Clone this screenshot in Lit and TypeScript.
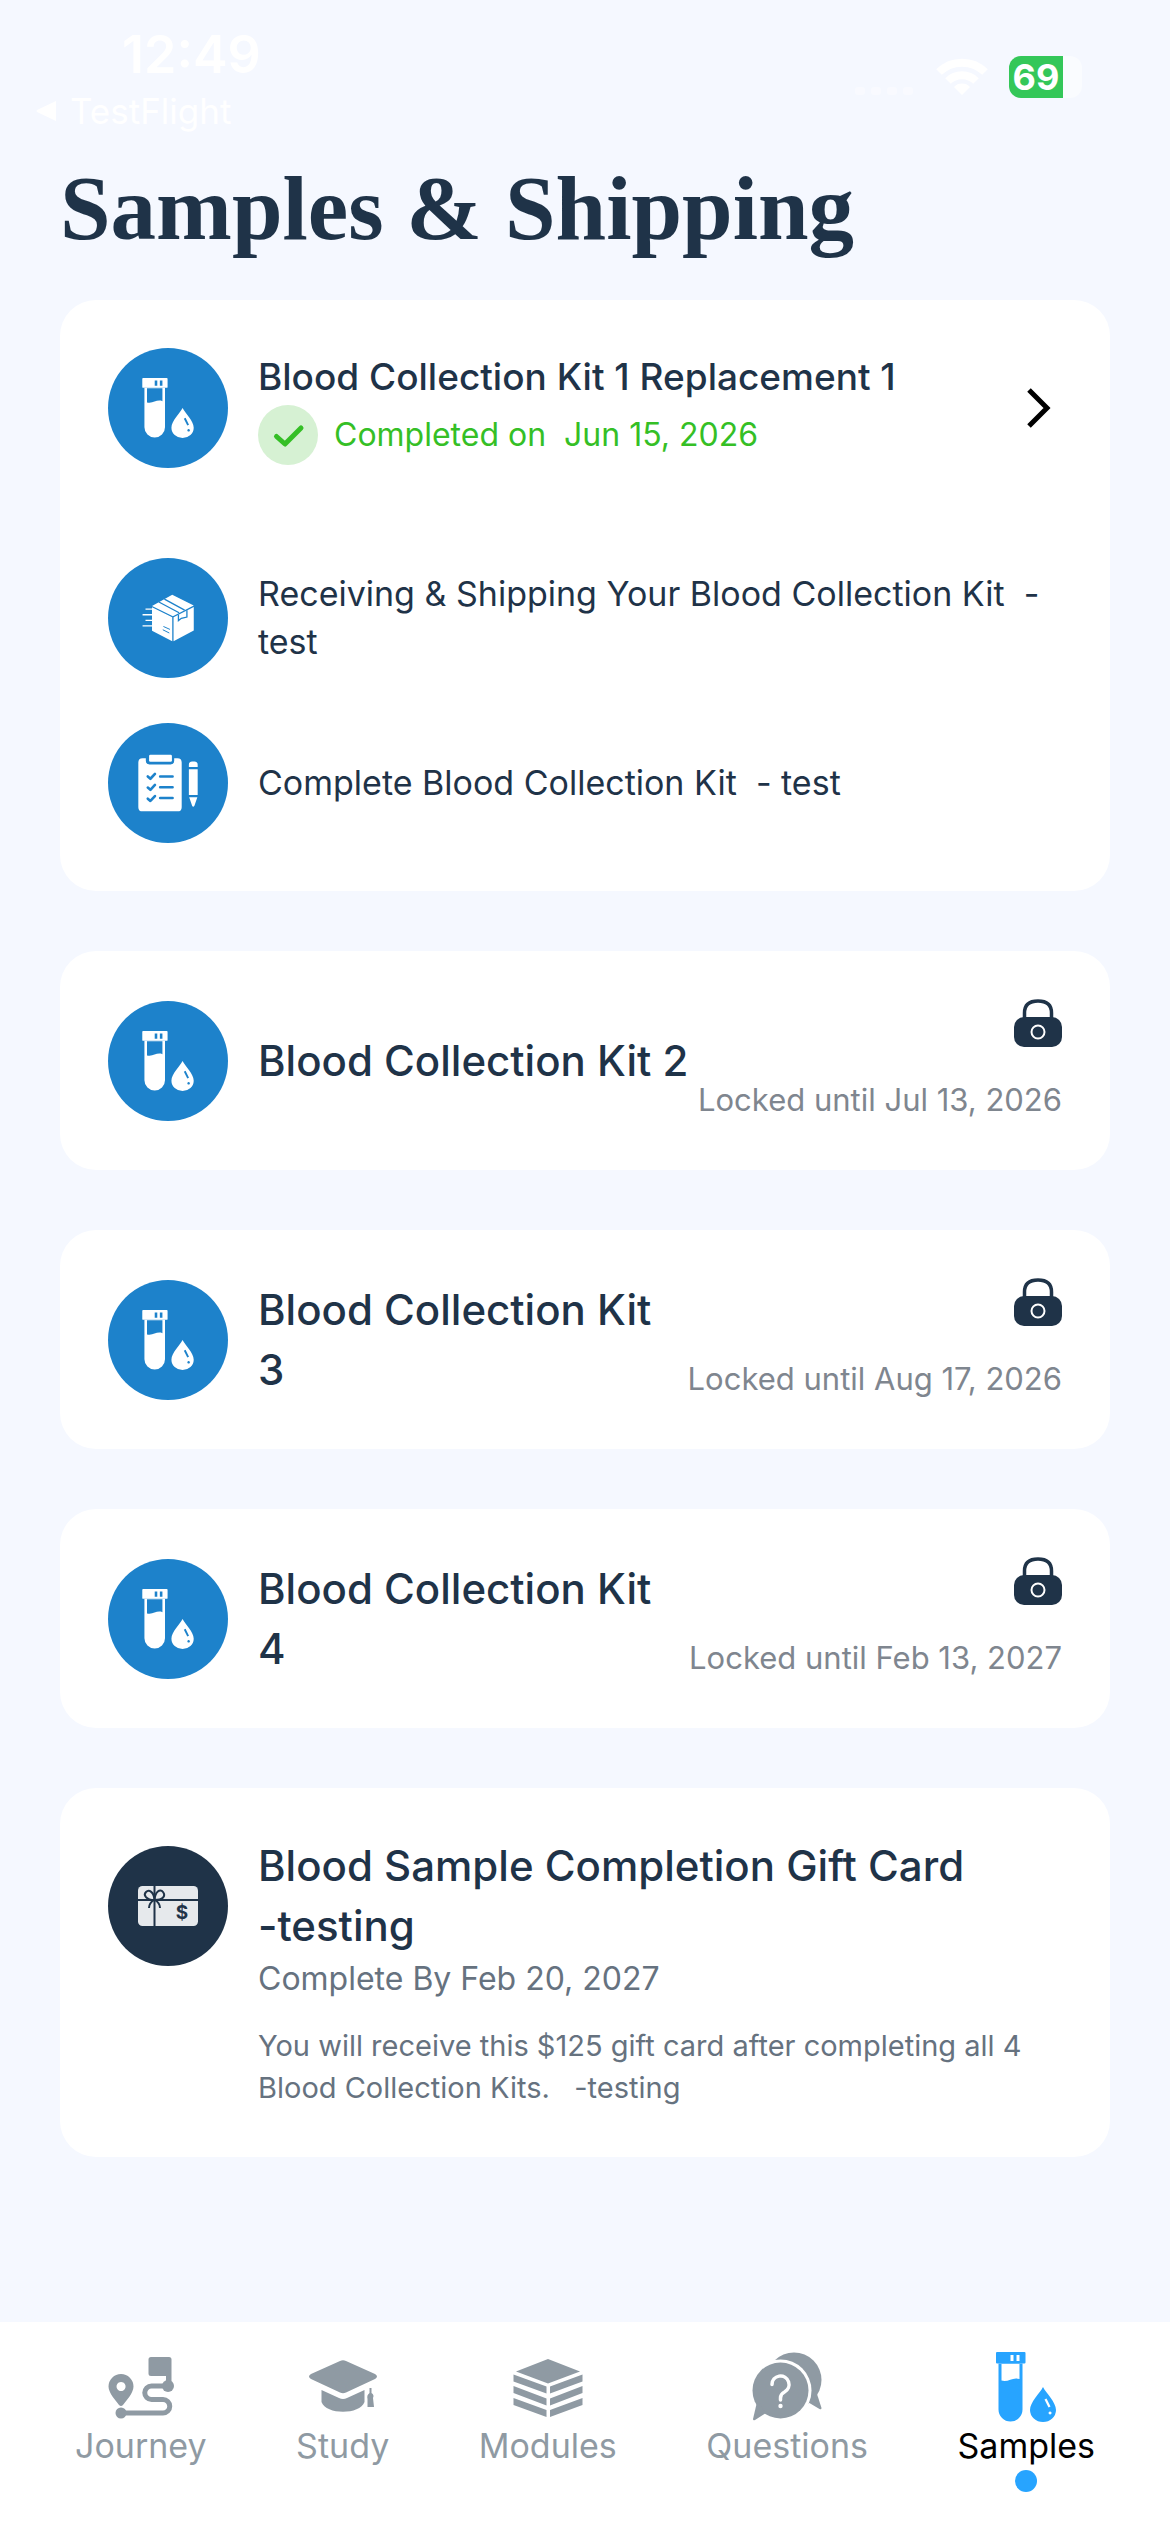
import { LitElement, html, css, svg, nothing, TemplateResult } from 'lit';
import { customElement, property } from 'lit/decorators.js';
import { classMap } from 'lit/directives/class-map.js';

const tubeIcon = html`
  <svg class="icon" viewBox="0 0 60 70" fill="currentColor" aria-hidden="true">
    <path
      fill-rule="evenodd"
      d="M1 0H28.500q1 0 1 1V10.500q0 1-1 1H1q-1 0-1-1V1q0-1 1-1zM14.500 3v6h3V3zM20.500 3v6h3V3z"
    />
    <path
      fill-rule="evenodd"
      d="M2.500 11.500H26.500V57.500a12 12 0 0 1-24 0zM5.500 12V28.500c7 2 11-4 18-1.500V12z"
    />
    <path
      fill-rule="evenodd"
      d="M47 35c3 6 13 15 13 23a13 12 0 0 1-26 0c0-8 10-17 13-23zM48.500 47.500l4 8 2-1-4-8zM54 59.500a1.500 1.500 0 1 0 .1 0z"
    />
  </svg>
`;

const boxIcon = html`
  <svg class="icon" viewBox="0 0 184 144" aria-hidden="true">
    <path
      fill="currentColor"
      d="M105 1L43 35L107 67L171 34zM43 39L105 70V143L43 111zM109 70L171 38V110L109 143z"
    />
    <g fill="none" stroke="#1d82cb" stroke-width="4">
      <path d="M64 23L126 56M81 14L143 48" />
      <path d="M124 62V80L133 73L150 69V48" />
      <path d="M78 98L98 107M76 108L96 118" stroke-width="3" />
    </g>
    <path
      d="M23 45H43M14 62H43M23 79H43M14 96H43"
      stroke="currentColor"
      stroke-width="4"
    />
  </svg>
`;

const clipboardIcon = html`
  <svg class="icon" viewBox="0 0 184 176" aria-hidden="true">
    <path
      fill="currentColor"
      d="M14 12H24V20q0 11 11 11H100q11 0 11-11V12H121q13 0 13 13V162q0 13-13 13H14q-13 0-13-13V25q0-13 13-13z"
    />
    <path
      fill="currentColor"
      d="M38 1H100q4 0 4 4V19q0 4-4 4H38q-4 0-4-4V5q0-4 4-4z"
    />
    <g
      fill="none"
      stroke="#1d82cb"
      stroke-width="8"
      stroke-linecap="round"
      stroke-linejoin="round"
    >
      <path d="M30 68l8 7L52 60M30 102l8 7L52 94M30 136l8 7L52 128" />
      <path d="M68 68H106M68 101H106M68 134H106" />
    </g>
    <path
      fill="currentColor"
      d="M156 39V32q0-10 10-10h7q10 0 10 10v7zM156 46h27V125h-27zM157 132h25L173 158q-4 6-7 0z"
    />
  </svg>
`;

const giftIcon = html`
  <svg class="icon" viewBox="0 0 60 40" aria-hidden="true">
    <rect width="60" height="40" rx="4.500" fill="#e6e9ec" />
    <g fill="none" stroke="#1f3348" stroke-width="2">
      <path d="M0 14H60M16.500 0V40" />
      <path
        d="M16.500 14C8 14 5 9 8 6s8 0 8.500 8C17 6 22 2 25 6s0 8-8.500 8zM16 14q-5 3-5 8M17 14q5 3 5 8"
      />
    </g>
    <text x="44" y="33" class="dollar">$</text>
  </svg>
`;

const lockIcon = html`
  <svg class="lock" viewBox="0 0 48 48" aria-hidden="true">
    <path
      d="M10.500 20V14q0-12 13.500-12t13.500 12V20"
      fill="none"
      stroke="#1f3348"
      stroke-width="3.500"
    />
    <rect y="18" width="48" height="30" rx="10" fill="#1f3348" />
    <circle cx="24" cy="33" r="6.500" fill="none" stroke="#fff" stroke-width="2" />
  </svg>
`;

const journeyIcon = svg`
  <path fill-rule="evenodd" d="M15 22a12.500 12.500 0 0 1 12.500 12.500C27.500 41 20 49 17 53q-2 2-4 0C10 49 2.500 41 2.500 34.500A12.500 12.500 0 0 1 15 22zM15 30a4.500 4.500 0 1 0 .1 0z" />
  <circle cx="15" cy="61" r="5.500" />
  <circle cx="62" cy="34" r="6" />
  <path d="M45 5H63q2.500 0 2.500 2.500V34H60V24H45q-2.500 0-2.500-2.500V7.500Q42.500 5 45 5z" />
  <path d="M15 61H57a6.500 6.500 0 0 0 0-13.500H45.500a6.500 6.500 0 0 1 0-13.500H62" fill="none" stroke="currentColor" stroke-width="5" />
`;

const studyIcon = svg`
  <path d="M32 9q3-1.500 6 0L67 22q4 2.500 0 5L38 40.500q-3 1.500-6 0L3 27q-4-2.500 0-5z" />
  <path d="M13.500 38L31 46q4 2 8 0L56.500 38V50C52 63 18 63 13.500 50z" />
  <path d="M61.500 36h2v5q3 2 1.500 5L66 55H59.500V47q-1-4 2-6z" />
`;

const modulesIcon = svg`
  <path d="M35 7L67 19.500L35 31.500L3 19.500z" />
  <path d="M.5 22.500L33.500 34.500V41.500L.5 29.500zM.5 34L33.500 46.500V53.500L.5 41zM.5 46L33.500 58V65L.5 53z" />
  <path d="M69.500 22.500L37 34.500V41.500L69.500 29.500zM69.500 34L37 46.500V53.500L69.500 41zM69.500 46L37 58V65L69.500 53z" />
`;

const questionsIcon = svg`
  <circle cx="42" cy="28" r="27.500" />
  <path d="M65 42L69.500 56q0 2-2 1L54 49z" />
  <circle cx="28.500" cy="38.500" r="31" fill="#fff" />
  <circle cx="28.500" cy="38.500" r="28" />
  <path d="M5 50L1 67q0 2 2 1L14 61z" />
  <path d="M20 32.500a8.500 8.500 0 1 1 12.500 7.500q-4 2-4 6V48" fill="none" stroke="#fff" stroke-width="3.500" stroke-linecap="round" />
  <circle cx="28.500" cy="54" r="2.200" fill="#fff" />
`;

@customElement('status-bar')
export class StatusBar extends LitElement {
  static styles = css`
    :host {
      display: flex;
      justify-content: space-between;
      align-items: flex-start;
      padding: 24px 88px 0 36px;
      color: #fff;
      font-family: Inter, 'Liberation Sans', sans-serif;
    }

    .time {
      padding-left: 86px;
      font-size: 52px;
      font-weight: 600;
      line-height: 62px;
    }

    .back {
      display: flex;
      align-items: center;
      gap: 12px;
      color: #fff;
      font-size: 35px;
      line-height: 50px;
      text-decoration: none;
    }

    .back svg {
      width: 22px;
      height: 22px;
    }

    .right {
      display: flex;
      align-items: center;
      gap: 21px;
      padding-top: 32px;
    }

    .dots {
      width: 60px;
      height: 40px;
      opacity: 0.4;
    }

    .wifi {
      width: 52px;
      height: 40px;
    }

    .battery {
      display: flex;
      align-items: center;
      width: 73px;
      height: 42px;
      border-radius: 12px;
      background: #fafcff;
      overflow: hidden;
    }

    .level {
      width: 54px;
      background: #34c759;
      font-size: 36px;
      font-weight: 700;
      line-height: 42px;
      text-align: center;
    }
  `;

  render() {
    return html`
      <div>
        <div class="time">12:49</div>
        <a class="back" href="#testflight">
          <svg viewBox="0 0 22 22" fill="currentColor" aria-hidden="true">
            <path d="M20 1v20L1 12q-1-1 0-2z" />
          </svg>
          TestFlight
        </a>
      </div>
      <div class="right">
        <svg class="dots" viewBox="0 0 60 40" fill="currentColor">
          <rect x="0" y="30" width="10" height="8" rx="3" />
          <rect x="16" y="30" width="10" height="8" rx="3" />
          <rect x="32" y="30" width="10" height="8" rx="3" />
          <rect x="48" y="30" width="10" height="8" rx="3" />
        </svg>
        <svg
          class="wifi"
          viewBox="0 0 52 40"
          fill="none"
          stroke="currentColor"
          stroke-width="8"
        >
          <path d="M3 15a33 33 0 0 1 46 0M12 24a20 20 0 0 1 28 0" />
          <path
            d="M26 38l-8-8a11 11 0 0 1 16 0z"
            fill="currentColor"
            stroke="none"
          />
        </svg>
        <div class="battery"><div class="level">69</div></div>
      </div>
    `;
  }
}

/* A round icon with whatever text stands next to it. */
@customElement('icon-row')
export class IconRow extends LitElement {
  @property({ attribute: false }) icon: TemplateResult | typeof nothing = nothing;

  @property({ type: Boolean, reflect: true }) dark = false;

  static styles = css`
    :host {
      display: flex;
      align-items: center;
      gap: 30px;
    }

    .circle {
      display: flex;
      flex: none;
      align-items: center;
      justify-content: center;
      width: 120px;
      height: 120px;
      border-radius: 50%;
      background: #1d82cb;
      color: #fff;
    }

    :host([dark]) {
      align-items: flex-start;
    }

    :host([dark]) .circle {
      margin-top: 10px;
      background: #1f3348;
    }

    .icon {
      width: 60px;
      height: 60px;
    }

    .dollar {
      fill: #1f3348;
      font: bold 19px Inter, sans-serif;
      text-anchor: middle;
    }

    .content {
      display: flex;
      flex: 1;
      min-width: 0;
    }
  `;

  render() {
    return html`
      <div class="circle">${this.icon}</div>
      <div class="content"><slot></slot></div>
    `;
  }
}

@customElement('tab-bar')
export class TabBar extends LitElement {
  @property() active = 'Samples';

  private tabs = [
    { label: 'Journey', icon: journeyIcon },
    { label: 'Study', icon: studyIcon },
    { label: 'Modules', icon: modulesIcon },
    { label: 'Questions', icon: questionsIcon },
    { label: 'Samples', icon: null },
  ];

  static styles = css`
    :host {
      display: block;
      background: #fff;
    }

    nav {
      display: flex;
      justify-content: space-between;
      min-height: 180px;
      padding: 30px 75px 0;
    }

    .tab {
      display: flex;
      flex-direction: column;
      align-items: center;
      color: #8f9aa3;
      font-size: 34px;
      line-height: 48px;
      text-decoration: none;
    }

    .tab svg {
      width: 70px;
      height: 70px;
      color: #8f9aa3;
    }

    .tab.active {
      color: #000;
    }

    .tab.active svg {
      color: #27a4ff;
    }

    .dot {
      width: 22px;
      height: 22px;
      border-radius: 50%;
      background: #27a4ff;
    }
  `;

  render() {
    return html`
      <nav aria-label="Main">
        ${this.tabs.map(({ label, icon }) => {
          const active = label === this.active;
          return html`
            <a
              class=${classMap({ tab: true, active })}
              href="#${label.toLowerCase()}"
              aria-current=${active ? 'page' : nothing}
            >
              ${icon
                ? html`<svg viewBox="0 0 70 70" fill="currentColor" aria-hidden="true">
                    ${icon}
                  </svg>`
                : tubeIcon}
              <span>${label}</span>
              ${active ? html`<span class="dot"></span>` : nothing}
            </a>
          `;
        })}
      </nav>
    `;
  }
}

@customElement('app-root')
export class AppRoot extends LitElement {
  private lockedKits = [
    { name: 'Blood Collection Kit 2', until: 'Jul 13, 2026' },
    { name: 'Blood Collection Kit 3', until: 'Aug 17, 2026' },
    { name: 'Blood Collection Kit 4', until: 'Feb 13, 2027' },
  ];

  static styles = css`
    :host {
      display: flex;
      flex-direction: column;
      min-height: 100vh;
      background: #f5f8ff;
      color: #1f3348;
      font-family: Inter, 'Open Sans', sans-serif;
    }

    h1,
    h2,
    p {
      margin: 0;
    }

    main {
      display: flex;
      flex: 1;
      flex-direction: column;
      gap: 60px;
      padding: 0 60px 60px;
    }

    h1 {
      padding: 18px 60px 36px;
      font-family: 'Liberation Serif', serif;
      font-size: 91px;
      font-weight: 700;
      line-height: 110px;
    }

    .card {
      display: flex;
      flex-direction: column;
      gap: 45px;
      padding: 48px;
      border-radius: 36px;
      background: #fff;
    }

    .first {
      margin-bottom: 45px;
    }

    .kit {
      display: flex;
      align-items: center;
      flex: 1;
      color: inherit;
      text-decoration: none;
    }

    .kit-text {
      flex: 1;
      padding-bottom: 3px;
    }

    .kit-title {
      font-size: 37px;
      font-weight: 500;
      line-height: 57px;
    }

    .done {
      display: flex;
      align-items: center;
      gap: 16px;
      color: #35bf26;
      font-size: 32px;
      line-height: 60px;
    }

    .check {
      width: 60px;
      height: 60px;
    }

    .chevron {
      width: 48px;
      height: 48px;
    }

    .step {
      flex: 1;
      color: inherit;
      font-size: 34px;
      line-height: 48px;
      text-decoration: none;
    }

    .title {
      flex: 1;
      align-self: center;
      font-size: 42px;
      font-weight: 500;
      line-height: 60px;
    }

    .locked {
      display: flex;
      flex-direction: column;
      align-items: flex-end;
      gap: 31px;
      padding-left: 5px;
      color: #7f868f;
      font-size: 31px;
      line-height: 44px;
      white-space: nowrap;
    }

    .lock {
      width: 48px;
      height: 48px;
    }

    .gift {
      flex: 1;
      color: #66727f;
    }

    .gift .title {
      color: #1f3348;
    }

    .nowrap {
      white-space: nowrap;
    }

    .due {
      font-size: 32px;
      line-height: 45px;
    }

    .note {
      padding-top: 24px;
      font-size: 29px;
      line-height: 42px;
    }
  `;

  render() {
    return html`
      <status-bar></status-bar>
      <h1>Samples &amp; Shipping</h1>
      <main>
        <section class="card">
          <icon-row class="first" .icon=${tubeIcon}>
            <a class="kit" href="#kit-1">
              <div class="kit-text">
                <h2 class="kit-title">Blood Collection Kit 1 Replacement 1</h2>
                <p class="done">
                  <svg class="check" viewBox="0 0 60 60" aria-hidden="true">
                    <circle cx="30" cy="30" r="30" fill="#d6f1d3" />
                    <path
                      d="M18.500 31.500l8.500 7.500L43 23"
                      fill="none"
                      stroke="#35bf26"
                      stroke-width="5"
                      stroke-linecap="round"
                      stroke-linejoin="round"
                    />
                  </svg>
                  <span>Completed on &nbsp;Jun 15, 2026</span>
                </p>
              </div>
              <svg class="chevron" viewBox="0 0 48 48" aria-hidden="true">
                <path
                  d="M15 6l18 18-18 18"
                  fill="none"
                  stroke="#000"
                  stroke-width="5"
                />
              </svg>
            </a>
          </icon-row>
          <icon-row .icon=${boxIcon}>
            <a class="step" href="#shipping">
              Receiving &amp; Shipping Your Blood Collection Kit &nbsp;- test
            </a>
          </icon-row>
          <icon-row .icon=${clipboardIcon}>
            <a class="step" href="#complete">
              Complete Blood Collection Kit &nbsp;- test
            </a>
          </icon-row>
        </section>

        ${this.lockedKits.map(
          kit => html`
            <section class="card">
              <icon-row .icon=${tubeIcon}>
                <h2 class="title">${kit.name}</h2>
                <div class="locked">
                  ${lockIcon}
                  <span>Locked until ${kit.until}</span>
                </div>
              </icon-row>
            </section>
          `
        )}

        <section class="card">
          <icon-row .icon=${giftIcon} dark>
            <div class="gift">
              <h2 class="title">
                Blood Sample Completion Gift Card
                <span class="nowrap">-testing</span>
              </h2>
              <p class="due">Complete By Feb 20, 2027</p>
              <p class="note">
                You will receive this $125 gift card after completing all 4
                Blood Collection Kits. &nbsp; -testing
              </p>
            </div>
          </icon-row>
        </section>
      </main>
      <tab-bar active="Samples"></tab-bar>
    `;
  }
}
